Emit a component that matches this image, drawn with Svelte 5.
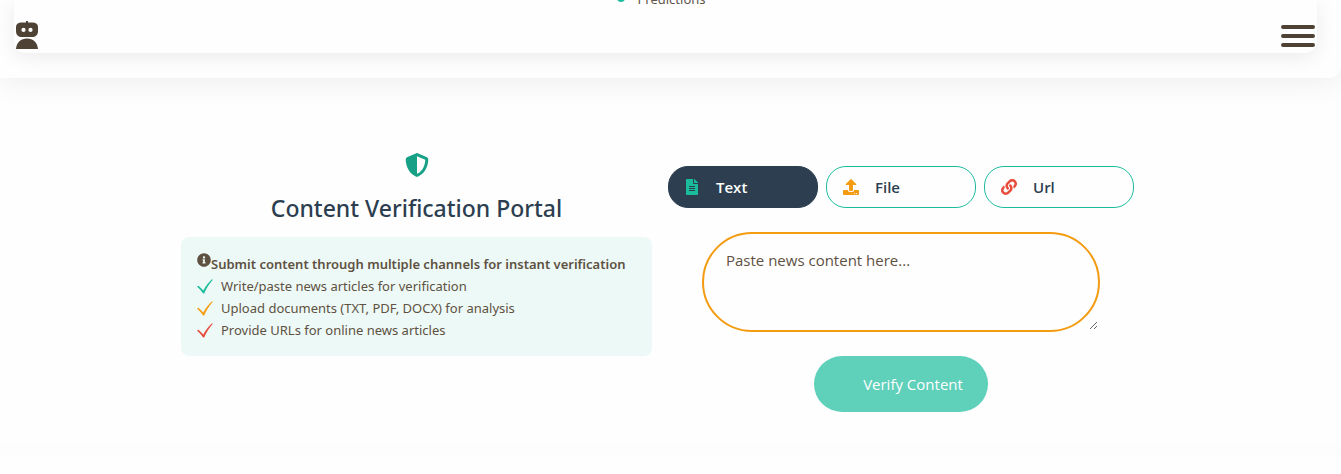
<script>
  let active = $state('Text');
  let content = $state('');
  const tabs = ['Text', 'File', 'Url'];
  const features = [
    { label: 'Write/paste news articles for verification', tone: 'teal' },
    { label: 'Upload documents (TXT, PDF, DOCX) for analysis', tone: 'orange' },
    { label: 'Provide URLs for online news articles', tone: 'red' }
  ];
</script>

<header>
  <nav>
    <div class="menu"><a href="#predictions"><span class="dot"></span>Predictions</a></div>
    <div class="bar">
      <a class="brand" href="#home" aria-label="Home">
        <svg width="22" height="28" viewBox="0 0 22 28">
          <path fill="currentColor" fill-rule="evenodd" d="M10 0h2v1.500h4.500C20 1.500 22 3 22 6v4c0 4-2.500 6-6 6H6c-3.500 0-6-2-6-6V6c0-3 2-4.500 5.500-4.500H10zM7.500 6.800a2.100 2.100 0 1 0 0 4.200 2.100 2.100 0 0 0 0-4.200zm7 0a2.100 2.100 0 1 0 0 4.200 2.100 2.100 0 0 0 0-4.200zM0 28C.5 21.500 5 17.500 11 17.500S21.500 21.500 22 28z" />
        </svg>
      </a>
      <button class="burger" aria-label="Toggle menu">
        <svg width="34" height="22" viewBox="0 0 34 22" stroke="currentColor" stroke-width="4" stroke-linecap="round">
          <path d="M2 2h30M2 11h30M2 20h30" />
        </svg>
      </button>
    </div>
  </nav>
</header>

<main>
  <section class="intro">
    <svg class="shield" width="24" height="24" viewBox="0 0 512 512">
      <path fill="currentColor" d="M256 0c4.600 0 9.200 1 13.400 2.900L457.700 82.800c22 9.300 38.400 31 38.300 57.200-.5 99.200-41.300 280.700-213.600 363.200-16.700 8-36.100 8-52.800 0C57.300 420.700 16.500 239.200 16 140c-.1-26.200 16.300-47.900 38.300-57.200L242.700 2.900C246.800 1 251.400 0 256 0zm0 66.800v378.100C394 378 431.100 230.100 432 141.400L256 66.800z" />
    </svg>
    <h1>Content Verification Portal</h1>
    <div class="card">
      <p>
        <svg width="14" height="14" viewBox="0 0 512 512">
          <path fill="currentColor" d="M256 8C119 8 8 119.100 8 256c0 137 111 248 248 248s248-111 248-248C504 119.100 393 8 256 8zm0 110c23.200 0 42 18.800 42 42s-18.800 42-42 42-42-18.800-42-42 18.800-42 42-42zm56 254c0 6.600-5.400 12-12 12h-88c-6.600 0-12-5.400-12-12v-24c0-6.600 5.400-12 12-12h12v-64h-12c-6.600 0-12-5.400-12-12v-24c0-6.600 5.400-12 12-12h64c6.600 0 12 5.400 12 12v100h12c6.600 0 12 5.400 12 12v24z" />
        </svg><strong>Submit content through multiple channels for instant verification</strong>
      </p>
      <ul>
        {#each features as f}
          <li>
            <svg class={f.tone} width="16" height="15" viewBox="0 0 16 15">
              <path fill="currentColor" d="M0 7.500L1.500 6.700 6.400 11.600C8.500 7.200 11.500 3.400 15 .3L15.800.8C12.500 4.700 9.500 9.200 7.200 14.500H6.200C4.300 11.900 2.300 9.700 0 7.500z" />
            </svg>{f.label}
          </li>
        {/each}
      </ul>
    </div>
  </section>

  <section class="verify">
    <div class="tabs">
      {#each tabs as tab}
        <button class="tab" class:active={active === tab} aria-pressed={active === tab} onclick={() => (active = tab)}>
          {#if tab === 'Text'}
            <svg class="teal doc" width="12" height="16" viewBox="0 0 384 512">
              <path fill="currentColor" d="M224 136V0H24C10.700 0 0 10.700 0 24v464c0 13.300 10.700 24 24 24h336c13.300 0 24-10.700 24-24V160H248c-13.200 0-24-10.800-24-24zm64 236c0 6.600-5.400 12-12 12H108c-6.600 0-12-5.400-12-12v-8c0-6.600 5.400-12 12-12h168c6.600 0 12 5.400 12 12v8zm0-64c0 6.600-5.400 12-12 12H108c-6.600 0-12-5.400-12-12v-8c0-6.600 5.400-12 12-12h168c6.600 0 12 5.400 12 12v8zm0-72v8c0 6.600-5.400 12-12 12H108c-6.600 0-12-5.400-12-12v-8c0-6.600 5.400-12 12-12h168c6.600 0 12 5.400 12 12zm96-114.100v6.100H256V0h6.100c6.400 0 12.500 2.500 17 7l97.900 98c4.500 4.500 7 10.600 7 16.900z" />
            </svg>
          {:else if tab === 'File'}
            <svg class="orange" width="16" height="16" viewBox="0 0 512 512">
              <path fill="currentColor" d="M296 384h-80c-13.300 0-24-10.700-24-24V192h-87.700c-17.800 0-26.700-21.500-14.100-34.100L242.300 5.700c7.500-7.500 19.800-7.500 27.300 0l152.200 152.200c12.600 12.600 3.700 34.100-14.100 34.100H320v168c0 13.300-10.700 24-24 24zm216-8v112c0 13.300-10.700 24-24 24H24c-13.300 0-24-10.700-24-24V376c0-13.300 10.700-24 24-24h136v8c0 30.900 25.100 56 56 56h80c30.900 0 56-25.100 56-56v-8h136c13.300 0 24 10.700 24 24zm-124 88c0-11-9-20-20-20s-20 9-20 20 9 20 20 20 20-9 20-20zm64 0c0-11-9-20-20-20s-20 9-20 20 9 20 20 20 20-9 20-20z" />
            </svg>
          {:else}
            <svg class="red" width="16" height="16" viewBox="0 0 512 512">
              <path fill="currentColor" d="M326.612 185.391c59.747 59.809 58.927 155.698.36 214.590-.11.120-.24.250-.36.370l-67.200 67.200c-59.270 59.270-155.699 59.262-214.960 0-59.270-59.260-59.270-155.700 0-214.960l37.106-37.106c9.840-9.840 26.786-3.300 27.294 10.606.648 17.722 3.826 35.527 9.690 52.721 1.986 5.822.567 12.262-3.783 16.612l-13.087 13.087c-28.026 28.026-28.905 73.660-1.155 101.960 28.024 28.579 74.086 28.749 102.325.510l67.200-67.190c28.191-28.191 28.073-73.757 0-101.830-3.701-3.694-7.429-6.564-10.341-8.569a16.037 16.037 0 0 1-6.947-12.606c-.396-10.567 3.348-21.456 11.698-29.806l21.054-21.055c5.521-5.521 14.182-6.199 20.584-1.731a152.482 152.482 0 0 1 20.522 17.197zM467.547 44.449c-59.261-59.262-155.690-59.270-214.960 0l-67.200 67.200c-.120.120-.250.250-.360.370-58.566 58.892-59.387 154.781.360 214.590a152.454 152.454 0 0 0 20.521 17.196c6.402 4.468 15.064 3.789 20.584-1.731l21.054-21.055c8.350-8.350 12.094-19.239 11.698-29.806a16.037 16.037 0 0 0-6.947-12.606c-2.912-2.005-6.640-4.875-10.341-8.569-28.073-28.073-28.191-73.639 0-101.830l67.200-67.190c28.239-28.239 74.300-28.069 102.325.510 27.750 28.300 26.872 73.934-1.155 101.960l-13.087 13.087c-4.350 4.350-5.769 10.790-3.783 16.612 5.864 17.194 9.042 34.999 9.690 52.721.509 13.906 17.454 20.446 27.294 10.606l37.106-37.106c59.271-59.259 59.271-155.699.001-214.959z" />
            </svg>
          {/if}
          {tab}
        </button>
      {/each}
    </div>
    <textarea bind:value={content} placeholder="Paste news content here..." aria-label="News content"></textarea>
    <button class="submit">Verify Content</button>
  </section>
</main>
<footer></footer>

<style>
  :global(body) {
    background: #fefefe;
    font-family: "Segoe UI", "Noto Sans", "Open Sans", sans-serif;
    font-size: 16px;
    color: #4e4235;
  }
  header {
    padding: 0 24px 25px 14px;
    background: #fefefe;
    border-radius: 0 0 12px 0;
    box-shadow: 0 4px 30px rgba(0, 0, 0, 0.07);
  }
  nav {
    padding: 0 2px 4px;
    background: #fefefe;
    border-radius: 0 0 12px 12px;
    box-shadow: 0 4px 20px rgba(0, 0, 0, 0.08);
  }
  .menu {
    display: flex;
    align-items: flex-end;
    justify-content: center;
    height: 9px;
    overflow: hidden;
  }
  .menu a {
    display: flex;
    align-items: center;
    gap: 12px;
    padding-right: 8px;
    font-size: 13px;
    line-height: 20px;
    color: #5f564b;
    text-decoration: none;
  }
  .dot {
    width: 8px;
    height: 8px;
    margin-bottom: 2px;
    border-radius: 50%;
    background: #1abc9c;
  }
  .bar {
    display: flex;
    align-items: flex-end;
    justify-content: space-between;
    padding-top: 12px;
  }
  .brand, .burger {
    display: flex;
    padding: 0;
    border: 0;
    background: none;
    color: #4e4235;
  }
  .burger {
    padding-bottom: 2px;
  }
  main {
    display: flex;
    flex-wrap: wrap;
    justify-content: center;
    gap: 16px;
    padding: 75px 26px 31px 0;
  }
  .intro {
    display: flex;
    flex-direction: column;
    align-items: center;
    flex: 0 1 471px;
  }
  .shield {
    color: #16a085;
  }
  h1 {
    margin: 14px 0 12px;
    font-size: 23px;
    line-height: 34px;
    font-weight: 500;
    color: #2c3e50;
  }
  .card {
    box-sizing: border-box;
    width: 100%;
    padding: 16px 15px 15px 16px;
    border-radius: 8px;
    background: #edf9f7;
    font-size: 13px;
    line-height: 22px;
    color: #5e5141;
  }
  .card p {
    display: flex;
    margin: 0;
    white-space: nowrap;
  }
  strong {
    font-weight: 600;
  }
  ul {
    margin: 0;
    padding: 0;
    list-style: none;
  }
  li {
    display: flex;
    align-items: center;
    gap: 8px;
  }
  .teal { color: #1abc9c; }
  .orange { color: #f39c12; }
  .red { color: #e74c3c; }
  .verify {
    display: flex;
    flex-direction: column;
    align-items: center;
    gap: 24px;
    padding-top: 13px;
  }
  .tabs {
    display: flex;
    gap: 8px;
  }
  .tab {
    display: flex;
    align-items: center;
    gap: 16px;
    width: 150px;
    height: 42px;
    padding: 0 16px;
    border: 1px solid #1abc9c;
    border-radius: 20px;
    background: #fefefe;
    font: 600 15px/24px "Segoe UI", "Open Sans", "Noto Sans", sans-serif;
    color: #2c3e50;
  }
  .tab.active {
    border-color: #2c3e50;
    background: #2c3e50;
    color: #fefefe;
  }
  .doc {
    padding: 0 2px 0 1px;
  }
  textarea {
    box-sizing: border-box;
    width: 398px;
    height: 100px;
    padding: 14px 22px;
    border: 2px solid #f39c12;
    border-radius: 50px;
    background: #fefefe;
    font: 15px/24px "Segoe UI", "Open Sans", "Noto Sans", sans-serif;
    color: #4e4235;
  }
  textarea::placeholder {
    color: #5e5141;
  }
  .submit {
    height: 56px;
    padding: 0 25px 0 49px;
    border: 0;
    border-radius: 28px;
    background: #5fd0ba;
    font: 15px/24px "Segoe UI", "Open Sans", "Noto Sans", sans-serif;
    color: #fefefe;
  }
  footer {
    height: 14px;
    background: #fdfdfd;
  }
</style>
